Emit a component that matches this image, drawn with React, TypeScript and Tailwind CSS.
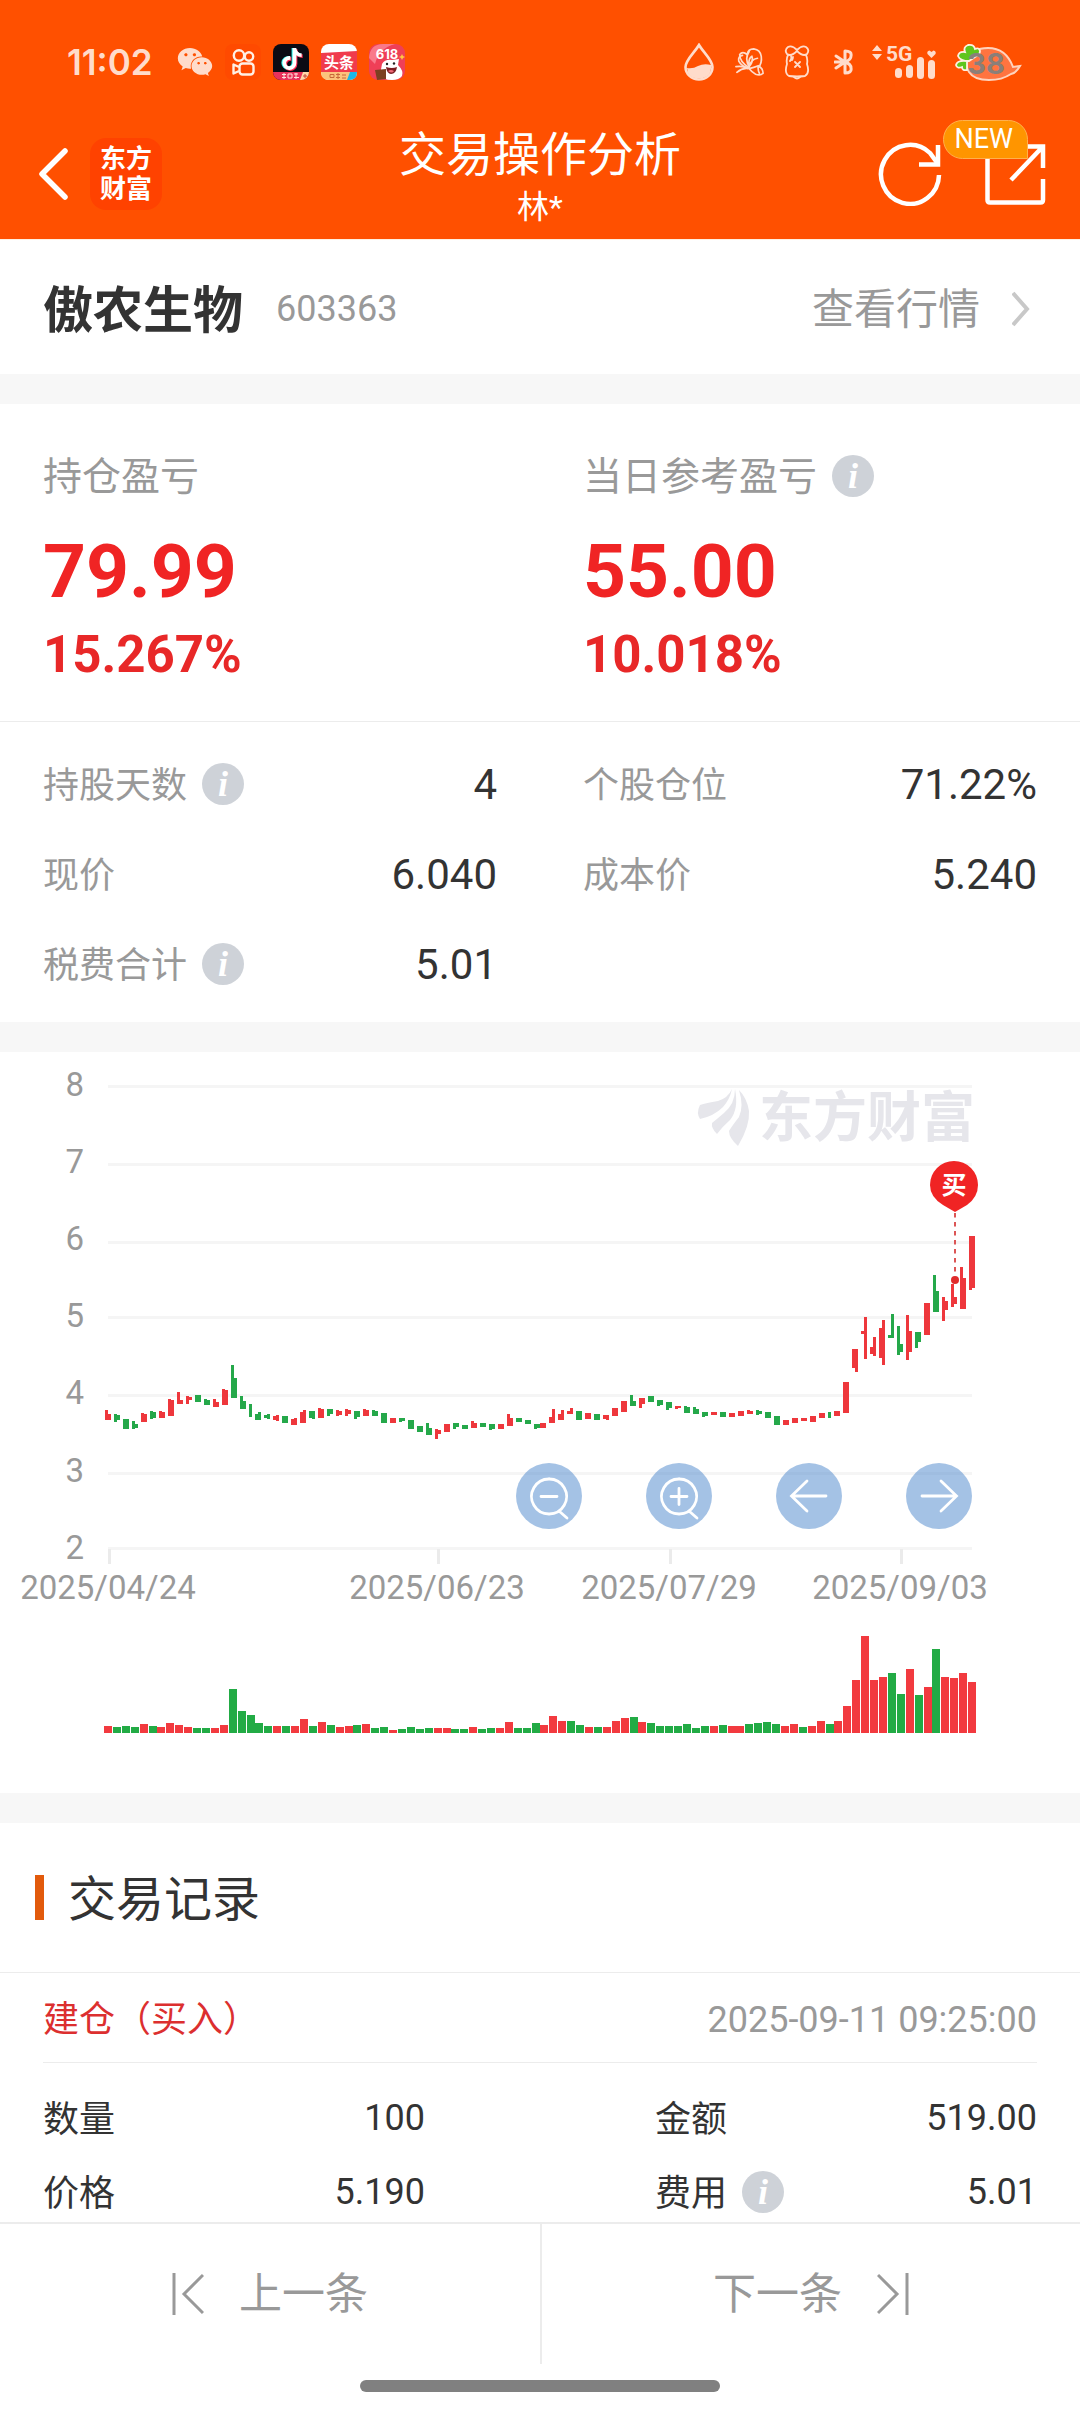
import { FaTiktok, FaWeixin } from 'react-icons/fa'

type Candle = [boolean, number, number, number, number]

const UP = '#ee373c'
const DOWN = '#25a84a'
const STEP = 8.908

// [sube, máximo, techo del cuerpo, base del cuerpo, mínimo]
const U = true
const D = false
const CANDLES: Candle[] = [
  [U, 350, 354, 360, 360], [D, 354, 355, 360, 362], [D, 359, 359, 369, 369], [D, 361, 364, 368, 369],
  [U, 353, 354, 362, 362], [D, 351, 352, 358, 359], [U, 351, 352, 358, 358], [U, 339, 340, 356, 356],
  [U, 332, 340, 344, 344], [U, 336, 337, 340, 344], [D, 335, 335, 342, 342], [D, 339, 340, 345, 345],
  [U, 339, 342, 347, 347], [U, 329, 330, 345, 345], [D, 305, 318, 338, 338], [D, 336, 341, 349, 349],
  [D, 344, 344, 344, 357], [D, 352, 354, 360, 360], [D, 354, 355, 358, 359], [U, 355, 356, 360, 361],
  [D, 356, 356, 363, 363], [U, 358, 359, 365, 365], [U, 350, 352, 363, 363], [D, 351, 351, 358, 359],
  [U, 348, 349, 358, 358], [D, 349, 349, 354, 356], [U, 350, 351, 355, 356], [U, 349, 350, 354, 356],
  [D, 351, 351, 357, 359], [U, 349, 350, 356, 356], [D, 350, 351, 356, 356], [D, 353, 353, 363, 363],
  [U, 358, 358, 363, 363], [D, 358, 358, 361, 362], [D, 360, 360, 369, 369], [D, 366, 366, 372, 372],
  [D, 363, 368, 375, 375], [U, 369, 370, 374, 379], [U, 364, 364, 372, 372], [D, 363, 363, 367, 369],
  [D, 365, 365, 369, 369], [U, 361, 363, 368, 368], [D, 363, 363, 367, 367], [D, 364, 364, 369, 370],
  [U, 364, 364, 369, 369], [U, 354, 358, 366, 366], [D, 358, 358, 362, 362], [D, 360, 360, 364, 364],
  [D, 364, 364, 368, 369], [U, 363, 363, 368, 368], [U, 349, 357, 363, 363], [U, 350, 354, 360, 360],
  [U, 348, 351, 354, 354], [D, 351, 351, 360, 360], [U, 353, 353, 359, 359], [D, 354, 354, 360, 360],
  [U, 355, 355, 359, 360], [U, 348, 348, 356, 356], [U, 341, 341, 352, 352], [D, 335, 341, 346, 346],
  [U, 338, 338, 344, 348], [D, 336, 336, 342, 342], [D, 340, 340, 345, 346], [D, 342, 342, 348, 350],
  [U, 346, 346, 348, 349], [D, 346, 347, 353, 353], [D, 347, 349, 354, 354], [D, 352, 352, 356, 357],
  [U, 352, 352, 355, 355], [D, 352, 352, 357, 357], [U, 353, 353, 357, 357], [U, 351, 351, 356, 356],
  [U, 350, 351, 354, 354], [D, 350, 351, 354, 355], [D, 352, 352, 358, 358], [D, 356, 356, 365, 365],
  [U, 360, 360, 365, 365], [U, 358, 358, 363, 363], [U, 358, 358, 361, 361], [U, 356, 356, 362, 362],
  [U, 353, 353, 358, 358], [D, 352, 352, 352, 358], [U, 351, 351, 356, 356], [U, 322, 322, 353, 353],
  [U, 289, 289, 308, 312], [U, 257, 271, 274, 299], [U, 277, 287, 294, 296], [U, 260, 268, 298, 305],
  [D, 254, 275, 278, 278], [D, 266, 284, 292, 295], [U, 255, 271, 292, 300], [D, 272, 272, 282, 288],
  [U, 243, 243, 275, 275], [D, 215, 231, 252, 252], [U, 237, 241, 250, 261], [U, 224, 237, 244, 247],
  [U, 207, 218, 249, 249], [U, 176, 176, 228, 230],
]

// Volumen diario, negativo = día a la baja
const VOLUMES = [
  7, -6, -7, -6, 9, -7, 6, 10, 8, 6, -5, -5, 5, 8, -44, -22, -18, -10, -7, 7, -7, 7, 14, -7, 11, -8, 6, 7, -8, 9,
  -5, -6, 3, -4, -6, -4, -5, 5, 5, -4, -4, 6, -4, -5, 5, 11, -5, -5, -10, 8, 17, 12, -12, -8, 6, -6, 6, 12, 15, -16,
  11, -10, -7, -7, -7, -9, -5, -7, 7, -8, 7, 7, -9, -10, -11, -9, 7, 9, -6, 7, 12, -9, 12, 27, 53, 97, 53, 56, -60, -39,
  64, -38, 46, -84, 56, 55, 60, 51,
]

const GRID = [
  { label: '8', line: 25, base: 36 },
  { label: '7', line: 103, base: 113 },
  { label: '6', line: 181, base: 190 },
  { label: '5', line: 256, base: 267 },
  { label: '4', line: 334, base: 344 },
  { label: '3', line: 412, base: 422 },
  { label: '2', line: 487, base: 499 },
]

const DATES = [
  { label: '2025/04/24', x: 109 },
  { label: '2025/06/23', x: 438 },
  { label: '2025/07/29', x: 670 },
  { label: '2025/09/03', x: 901 },
]

function InfoButton({ label }: { label: string }) {
  return (
    <button
      aria-label={label}
      className="flex h-[42px] w-[42px] items-center justify-center rounded-full bg-[#ced2d8] font-['Liberation_Serif',serif] text-[36px] leading-[42px] font-bold text-white italic"
    >
      i
    </button>
  )
}

function StatusBar() {
  return (
    <div className="flex h-[126px] items-center justify-between pr-[58px] pb-[2px] pl-[67px] text-[#ffdccb]">
      <div className="flex items-center gap-3">
        <span className="mr-3 font-['Inter',sans-serif] text-[35px] leading-10 font-semibold">11:02</span>
        <FaWeixin className="h-9 w-9" />
        {/* Kuaishou */}
        <svg className="h-9 w-9" viewBox="0 0 36 36" fill="none" stroke="#fff0e6" strokeWidth="2.4">
          <rect width="36" height="36" rx="8" fill="#ff4a00" stroke="none" />
          <circle cx="14" cy="11.5" r="5.2" />
          <circle cx="24" cy="12.5" r="4.2" />
          <rect x="14.5" y="19.5" width="14" height="11" rx="3" />
          <path d="M14 23l-5.500-2.500v9l5.500-2.500" strokeLinejoin="round" />
        </svg>
        {/* Douyin */}
        <span className="relative flex h-9 w-9 overflow-hidden rounded-lg bg-[#0b0b14]">
          <FaTiktok className="absolute top-1 left-[8px] h-[22px] w-[20px] text-[#25f4ee]" />
          <FaTiktok className="absolute top-[5px] left-[10px] h-[22px] w-[20px] text-[#fe2c55]" />
          <FaTiktok className="absolute top-1 left-[9px] h-[22px] w-[20px] text-white" />
          <svg className="absolute bottom-0 left-0 w-9" viewBox="0 0 36 8">
            <path d="M0 0h36v8H0z" fill="#e8315b" />
            <path d="M30 0h6v8h-9z" fill="#ffd9a8" />
            <path d="M9 2.500h4M9 5.500h4M11 1v6M15 2h4v4h-4zM21 2h4M21 5.500h5M23 1v6" stroke="#ffe3dc" fill="none" />
            <path d="M30 4h4M32 2v4" stroke="#c2453a" fill="none" />
          </svg>
        </span>
        {/* Toutiao */}
        <svg className="h-9 w-9 overflow-visible" viewBox="0 0 36 36">
          <rect width="36" height="36" rx="8" fill="#fff" />
          <path d="M0 9l36-2v21H0z" fill="#f03b4d" />
          <text x="18" y="24" textAnchor="middle" fill="#fff" className="font-['Noto_Sans_CJK_SC',sans-serif] text-[15px] font-bold">
            头条
          </text>
          <path d="M0 28h36q0 8-8 8H8q-8 0-8-8" fill="#fbc37c" />
          <path d="M29 28h7q0 8-8 8h-2z" fill="#19b8e8" />
          <path d="M9 30.500h4v3H9zM15 30.500h4M15 33.500h4M17 29v6M21 31h4M21 34h4" stroke="#c8683a" fill="none" />
        </svg>
        {/* JD 618 */}
        <svg className="h-9 w-9 overflow-visible" viewBox="0 0 36 36">
          <rect width="36" height="36" rx="9" fill="#ef3f57" />
          <path d="M0 14q1-14 14-14h12q-16 4-20 20z" fill="#f9798a" />
          <text x="18" y="15" textAnchor="middle" fill="#fff" className="font-['Inter',sans-serif] text-[13px] font-bold">
            618
          </text>
          <path d="M13 20q3-5 10-4l7-1-1 6q6 6 4 11-3 4-10 4-9 0-12-5z" fill="#fff" />
          <path d="M17 23q6 2 11 0-1 7-6 7-4 0-5-7z" fill="#7c1d22" />
          <path d="M19 27q3-2 6 0-2 3-6 0z" fill="#f06a78" />
          <circle cx="18" cy="20" r="1.2" fill="#222" />
          <circle cx="25" cy="19.5" r="1.2" fill="#222" />
          <path d="M6 26l11-1v10l-9 1z" fill="#7a4021" />
          <path d="M33 10l1 2 2 1-2 1-1 2-1-2-2-1 2-1z" fill="#ffc93f" />
        </svg>
      </div>

      <div className="flex items-center">
        <svg className="h-[38px] w-[32px]" viewBox="0 0 32 38">
          <path d="M16 2C12 9 2.500 17 2.500 24a13.500 12.500 0 0 0 27 0C29.500 17 20 9 16 2z" fill="none" stroke="currentColor" strokeWidth="2.6" />
          <path d="M4 25q6 1 11-2 6-3 13-1 1 13-12 13.500Q5 36 4 25z" fill="currentColor" />
        </svg>
        {/* Mariposa */}
        <svg className="ml-5 h-[32px] w-[30px]" viewBox="0 0 32 32" fill="none" stroke="currentColor" strokeWidth="1.8" strokeLinecap="round">
          <path d="M15 22Q5 16 5 8q3-4 8 0 1-6 7-6 7 1 8 8 1 7-3 12" />
          <path d="M8 9q-5 1-4 6 3 6 11 7" />
          <path d="M25 20q5 3 5 8-3 3-8 1-4-2-7-6 5-1 10-3z" />
          <path d="M15 21q-5-9 0-16M15 21q-1-9 3-11 2 5-3 11M15 21q2-8 9-9M1 21q8-1 13 2M2 27q6-5 12-4M25 20q-1 4 1 8" />
        </svg>
        {/* Osito */}
        <svg className="ml-[19px] h-[36px] w-[26px]" viewBox="0 0 26 36" fill="none" stroke="currentColor" strokeWidth="1.8" strokeLinecap="round">
          <path d="M13 6q-5-5-9-3-4 3-1 7 4 3 10-3 6 6 10 3 3-4-1-7-4-2-9 3z" />
          <path d="M4 11q-2 4-1 9-3 9 2 12 8 1 16 0 5-3 2-12 1-5-1-9" />
          <path d="M10 33q3 3 6 0M11 18l5 5M16 18l-5 5M7 12q1 3-1 5M9 13q0 2-1 3" />
        </svg>
        <svg className="ml-6 h-[26px] w-[20px]" viewBox="0 0 20 26" fill="none" stroke="currentColor" strokeWidth="3" strokeLinecap="round" strokeLinejoin="round">
          <path d="M2 7l9 6-9 6M1 13h10M11 2v22M11 2q7 0 6 5 0 4-6 6 6 2 6 6 1 5-6 5" />
        </svg>
        {/* Señal 5G */}
        <svg className="ml-4 h-[38px] w-[66px] overflow-visible" viewBox="0 0 66 38" fill="currentColor">
          <path d="M2 8l5-6 5 6zM2 11l5 6 5-6z" />
          <text x="16" y="18" className="font-['Roboto',sans-serif] text-[21px] font-bold">5G</text>
          <rect x="25" y="25" width="7" height="10" rx="3.5" />
          <rect x="36" y="22" width="7" height="13" rx="3.5" />
          <rect x="47" y="14" width="7" height="22" rx="3.5" />
          <rect x="58" y="17" width="7" height="19" rx="3.5" />
          <path d="M61.500 15l-4-4q-1-3 2-3.500l2 1.500 2-1.500q3 .5 2 3.500z" />
        </svg>
        {/* Batería en forma de zanahoria */}
        <svg className="ml-[18px] h-[38px] w-[68px] overflow-visible" viewBox="0 0 68 38">
          <path d="M13 17Q18 5 34 5q18 0 25 19l7-1q-4 7-9 8-9 6-22 6-15 0-20-8-4-6-2-12z" fill="#ff7440" stroke="#ffd3bd" strokeWidth="2" />
          <path d="M15 18q-9 0-11-5 1-5 7-4-2-5 3-7 6-1 7 4 4-2 5 2 0 4-5 6-3 2-6 4zM13 18q-10-1-11 4 1 4 6 2 0 4 5 3z" fill="#5fc51d" stroke="#fff0e0" strokeWidth="1.8" />
          <text x="32" y="31" textAnchor="middle" fill="#8a7f79" className="font-['Inter',sans-serif] text-[29px] font-bold">
            38
          </text>
        </svg>
      </div>
    </div>
  )
}

function Header() {
  return (
    <header className="border-b border-[#fff0e0] bg-[#ff5000] text-white">
      <StatusBar />
      <div className="grid h-[113px] grid-cols-[1fr_auto_1fr] items-start px-[34px]">
        <div className="flex h-24 items-center gap-[20px]">
          <button aria-label="返回">
            <svg className="h-[56px] w-[36px]" viewBox="0 0 36 56" fill="none" stroke="currentColor" strokeWidth="5.5" strokeLinecap="round" strokeLinejoin="round">
              <path d="M31 5L8 28l23 23" />
            </svg>
          </button>
          <div className="flex h-[72px] w-[72px] flex-col items-center justify-center rounded-2xl bg-[#ff4200] text-[26px] leading-[30px] font-bold">
            <span>东方</span>
            <span>财富</span>
          </div>
        </div>
        <div className="flex flex-col items-center">
          <h1 className="text-[47px] leading-[58px]">交易操作分析</h1>
          <p className="text-[32px] leading-[46px]">林*</p>
        </div>
        <div className="flex h-24 items-center justify-end gap-[42px]">
          <button aria-label="刷新">
            <svg className="h-[64px] w-[64px]" viewBox="0 0 64 64" fill="none" stroke="currentColor" strokeWidth="4.5">
              <path d="M61 33A29 29.500 0 1 1 52 11L60 22" />
              <path d="M41 22.500H60V3" />
            </svg>
          </button>
          <button aria-label="分享" className="relative">
            <svg className="h-[62px] w-[62px]" viewBox="0 0 62 62" fill="none" stroke="currentColor" strokeWidth="4.5">
              <path d="M28 3.500H59V25M58 4.500L27 37" />
              <path d="M3.500 14v43q0 2.500 2.500 2.500h50.500q2.500 0 2.500-2.500V36" />
            </svg>
            <span className="absolute -top-[23px] right-[18px] rounded-full rounded-br-none border border-[#ffb04d] bg-[#ff9500] pr-[14px] pl-[10px] font-['Roboto',sans-serif] text-[27px] leading-[37px]">
              NEW
            </span>
          </button>
        </div>
      </div>
    </header>
  )
}

function Stat({ label, value, info }: { label: string; value: string; info?: boolean }) {
  return (
    <div className="flex h-[90px] items-center justify-between">
      <dt className="flex items-center gap-[15px] text-[36px] text-[#999999]">
        <span className="pt-[3px]">{label}</span>
        {info && <InfoButton label={`${label}说明`} />}
      </dt>
      <dd className="text-[42px]">{value}</dd>
    </div>
  )
}

function Profit({ label, amount, rate, info }: { label: string; amount: string; rate: string; info?: boolean }) {
  return (
    <div>
      <div className="flex h-[52px] items-center gap-[15px] text-[39px] text-[#999999]">
        <span className="pt-[3px]">{label}</span>
        {info && <InfoButton label={`${label}说明`} />}
      </div>
      <p className="mt-[17px] text-[75px] leading-[104px] font-bold text-[#f02424]">{amount}</p>
      <p className="text-[51px] leading-[64px] font-bold text-[#e82828]">{rate}</p>
    </div>
  )
}

function Chart() {
  return (
    <svg className="block h-auto w-full" viewBox="0 -8 1080 741" role="img" aria-label="股价走势与成交量">
      {GRID.map((g) => (
        <g key={g.label}>
          <rect x="108" y={g.line} width="864" height="3" fill="#f5f5f5" />
          <text x="84" y={g.base} textAnchor="end" fill="#999999" className="text-[33px]">{g.label}</text>
        </g>
      ))}
      {DATES.map((d) => (
        <g key={d.label}>
          <rect x={d.x - 1} y="489" width="3" height="15" fill="#ebebeb" />
          <text x={d.x - 1} y="539" textAnchor="middle" fill="#999999" className="text-[33px]">{d.label}</text>
        </g>
      ))}

      {/* Marca de agua */}
      <g fill="#e6e6eb">
        <path d="M732 29Q728 38 718 41 706 43 700 45 696 53 700 59 714 56 723 47 730 39 732 29z" />
        <path d="M735 29Q735 44 724 53 717 59 712 63 711 68 717 74 722 67 730 60 739 49 735 29z" />
        <path d="M739 30Q744 46 739 57 732 66 729 71 729 78 738 86 750 66 749 51 747 38 739 30z" />
        <text x="759" y="77" className="text-[54px] font-bold">东方财富</text>
      </g>

      {CANDLES.map(([up, high, top, bottom, low], i) => {
        const x = 3 * Math.round((i * STEP) / 3)
        const wick = i * STEP - x > 0.82 ? 3 : 0
        return (
          <g key={i} fill={up ? UP : DOWN}>
            <rect x={105 + x} y={top} width="6" height={bottom - top} />
            <rect x={105 + x + wick} y={high} width="3" height={low - high} />
          </g>
        )
      })}

      {VOLUMES.map((v, i) => (
        <rect key={i} x={Math.round(104 + i * STEP)} y={673 - Math.abs(v)} width="8" height={Math.abs(v)} fill={v > 0 ? '#f23a3f' : '#22ab45'} />
      ))}

      {/* Punto de compra */}
      <path d="M955 153V213" stroke="#dc5555" strokeWidth="2" strokeDasharray="4.500 4.500" />
      <circle cx="955" cy="220" r="4" fill="#e02b2b" />
      <path d="M954 101a24 24 0 0 1 24 24q0 12-11 20l-12 7-12-7q-13-8-13-20a24 24 0 0 1 24-24z" fill="#f02424" />
      <text x="954" y="134" textAnchor="middle" fill="#fff" className="text-[25px] font-bold">买</text>
    </svg>
  )
}

function ChartButton({ label, d }: { label: string; d: string }) {
  return (
    <button aria-label={label} className="h-[66px] w-[66px] rounded-full bg-[#4a86cb]/50">
      <svg viewBox="0 0 66 66" fill="none" stroke="#fff" strokeWidth="2.8" strokeLinecap="round">
        <path d={d} />
      </svg>
    </button>
  )
}

function RecordItem({ label, value, info }: { label: string; value: string; info?: boolean }) {
  return (
    <div className="flex h-[60px] items-center justify-between text-[36px]">
      <dt className="flex items-center gap-[15px]">
        <span className="pt-[3px]">{label}</span>
        {info && <InfoButton label={`${label}说明`} />}
      </dt>
      <dd>{value}</dd>
    </div>
  )
}

export default function App() {
  const lens = 'M33 16a17.500 17.500 0 1 0 .1 0M43 48l8 7M25 33.500h16'

  return (
    <div className="flex min-h-screen flex-col bg-white font-['Roboto','Noto_Sans_CJK_SC',sans-serif] text-[#333333]">
      <Header />

      <section className="flex h-[134px] items-center justify-between pt-1 pr-[50px] pl-[43px]">
        <div className="flex items-center gap-[33px]">
          <h2 className="pt-1 text-[50px] font-bold">傲农生物</h2>
          <span className="text-[36px] text-[#999999]">603363</span>
        </div>
        <a href="#quote" className="flex items-center gap-[32px] text-[42px] text-[#999999]">
          查看行情
          <svg className="h-9 w-[18px]" viewBox="0 0 18 36" fill="none" stroke="#c8c8c8" strokeWidth="4">
            <path d="M1 2l14 16L1 34" />
          </svg>
        </a>
      </section>

      <div className="h-[30px] bg-[#f7f7f7]" />

      <section>
        <div className="grid grid-cols-2 gap-x-[86px] border-b border-[#ececec] px-[43px] pt-[46px] pb-[34px]">
          <Profit label="持仓盈亏" amount="79.99" rate="15.267%" />
          <Profit label="当日参考盈亏" amount="55.00" rate="10.018%" info />
        </div>
        <dl className="grid grid-cols-2 gap-x-[86px] px-[43px] pt-[17px] pb-[13px]">
          <Stat label="持股天数" value="4" info />
          <Stat label="个股仓位" value="71.22%" />
          <Stat label="现价" value="6.040" />
          <Stat label="成本价" value="5.240" />
          <Stat label="税费合计" value="5.01" info />
        </dl>
      </section>

      <div className="h-[30px] bg-[#f7f7f7]" />

      <section className="relative">
        <Chart />
        <div className="absolute top-[411px] right-[10%] flex gap-[64px]">
          <ChartButton label="缩小" d={lens} />
          <ChartButton label="放大" d={`${lens}M33 25.500v16`} />
          <ChartButton label="向左" d="M50 33H16M31 18L15.500 33 31 48" />
          <ChartButton label="向右" d="M16 33h34M35 18l15.500 15L35 48" />
        </div>
      </section>

      <div className="h-[30px] bg-[#f7f7f7]" />

      <section>
        <div className="flex h-[150px] items-center gap-[24px] border-b border-[#ececec] pl-[35px]">
          <span className="h-[45px] w-[9px] bg-[#e25a0c]" />
          <h2 className="pt-1 text-[48px]">交易记录</h2>
        </div>
        <div className="px-[43px]">
          <div className="flex h-[90px] items-center justify-between border-b border-[#ececec] pt-1 text-[36px]">
            <h3 className="text-[#dc2f2f]">建仓（买入）</h3>
            <time className="text-[#999999]">2025-09-11 09:25:00</time>
          </div>
          <dl className="grid grid-cols-2 gap-x-[230px] gap-y-[14px] pt-[25px]">
            <RecordItem label="数量" value="100" />
            <RecordItem label="金额" value="519.00" />
            <RecordItem label="价格" value="5.190" />
            <RecordItem label="费用" value="5.01" info />
          </dl>
        </div>
      </section>

      <footer className="mt-auto">
        <div className="grid grid-cols-2 border-t-2 border-[#ececec] text-[43px] text-[#999999]">
          <button className="flex h-[140px] items-center justify-center gap-[35px]">
            <svg className="h-[42px] w-[32px]" viewBox="0 0 32 42" fill="none" stroke="currentColor" strokeWidth="3">
              <path d="M2 0v42M31 2L12 21l19 19" />
            </svg>
            上一条
          </button>
          <button className="flex h-[140px] items-center justify-center gap-[35px] border-l-2 border-[#ececec]">
            下一条
            <svg className="h-[42px] w-[32px]" viewBox="0 0 32 42" fill="none" stroke="currentColor" strokeWidth="3">
              <path d="M30 0v42M1 2l19 19L1 40" />
            </svg>
          </button>
        </div>
        <div className="flex h-[49px] items-center justify-center pb-[6px]">
          <span className="h-3 w-1/3 rounded-full bg-[#808080]" />
        </div>
      </footer>
    </div>
  )
}
